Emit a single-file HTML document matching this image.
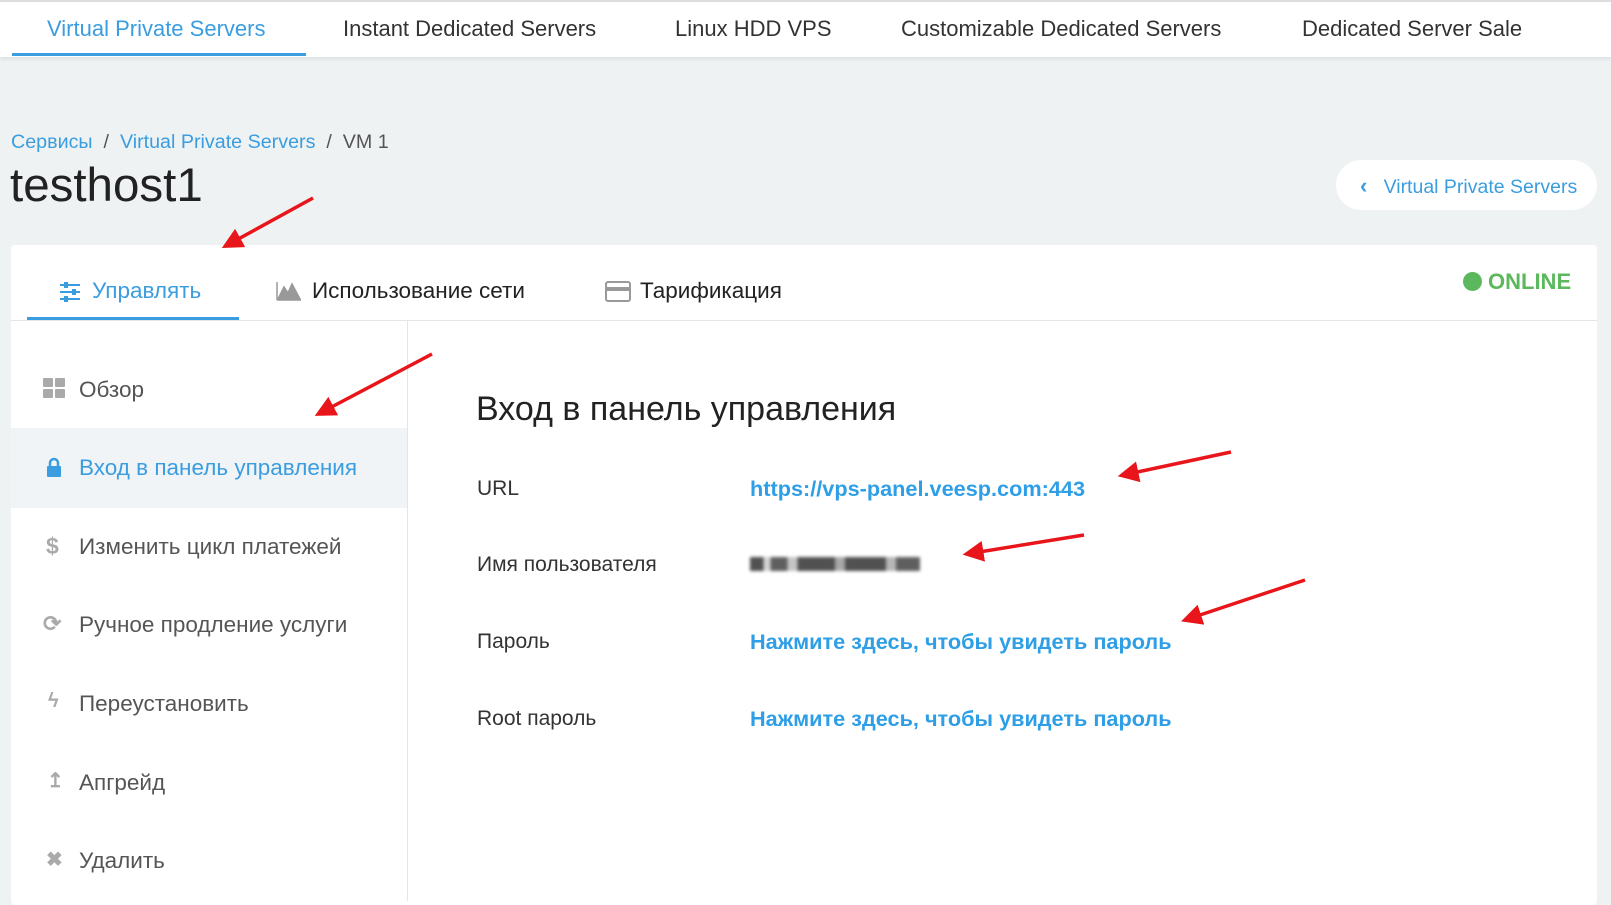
<!DOCTYPE html>
<html><head><meta charset="utf-8"><style>
*{margin:0;padding:0;box-sizing:border-box}
body{width:1611px;height:893px;background:#eef2f3;font-family:"Liberation Sans","Noto Sans CJK SC",sans-serif;position:relative;overflow:hidden;color:#333}
.a{position:absolute;white-space:nowrap}
.nav{position:absolute;left:0;top:0;width:1611px;height:57px;background:#fff;border-top:2px solid #ddd;box-shadow:0 2px 4px rgba(0,0,0,.08)}
.nav .a{top:14px;font-size:22px;color:#333}
.nav .a.blue,.blue{color:#3a9de0}
.card{position:absolute;left:11px;top:245px;width:1586px;height:660px;background:#fff;border-radius:4px}
.tab{font-size:22.5px;top:278px;color:#222}
.tab.blue{color:#3a9de0}
.side{font-size:22.5px;color:#555}
.lbl{font-size:21px;color:#333;left:477px}
.lnk{font-size:21.7px;color:#2e9fe6;left:750px;font-weight:bold}
</style></head><body>
<div class="nav">
<div class="a blue" style="left:47px">Virtual Private Servers</div>
<div class="a" style="left:343px">Instant Dedicated Servers</div>
<div class="a" style="left:675px">Linux HDD VPS</div>
<div class="a" style="left:901px">Customizable Dedicated Servers</div>
<div class="a" style="left:1302px">Dedicated Server Sale</div>
<div style="position:absolute;left:12px;top:51px;width:294px;height:3px;background:#3a9de0"></div>
</div>
<div class="a" style="left:11px;top:131px;font-size:19.7px;color:#555"><span class="blue">Сервисы</span> &nbsp;/&nbsp; <span class="blue">Virtual Private Servers</span> &nbsp;/&nbsp; VM 1</div>
<div class="a" style="left:10px;top:158px;font-size:47.5px;color:#222">testhost1</div>
<div class="a" style="left:1336px;top:160px;width:261px;height:50px;border-radius:25px;background:#fff;font-size:19.5px;color:#3a9de0;padding:13px 0 0 24px"><b style="font-size:22px">‹</b>&nbsp;&nbsp; Virtual Private Servers</div>
<div class="card"></div>
<svg class="a" style="left:58px;top:281px" width="24" height="22"><g stroke="#3a9de0" stroke-width="2"><line x1="2" y1="4" x2="22" y2="4"/><line x1="2" y1="11" x2="22" y2="11"/><line x1="2" y1="18" x2="22" y2="18"/></g><g fill="#3a9de0"><rect x="6" y="1" width="4" height="6"/><rect x="14" y="8" width="4" height="6"/><rect x="6" y="15" width="4" height="6"/></g></svg>
<div class="a tab blue" style="left:92px">Управлять</div>
<svg class="a" style="left:275px;top:280px" width="28" height="22"><path d="M2 20V2M2 20h24M3 19l6-12 4 6 4-9 8 15z" fill="#999" stroke="#999" stroke-width="1.5"/></svg>
<div class="a tab" style="left:312px">Использование сети</div>
<svg class="a" style="left:605px;top:281px" width="26" height="22"><rect x="1" y="1" width="24" height="19" rx="2" fill="none" stroke="#999" stroke-width="2"/><rect x="1" y="6" width="24" height="4" fill="#999"/></svg>
<div class="a tab" style="left:640px">Тарификация</div>
<div style="position:absolute;left:11px;top:320px;width:1586px;height:1px;background:#e5e5e5"></div>
<div style="position:absolute;left:27px;top:317px;width:212px;height:3px;background:#3a9de0"></div>
<div class="a" style="left:1463px;top:272px;width:19px;height:19px;border-radius:50%;background:#5cb85c"></div>
<div class="a" style="left:1488px;top:269px;font-size:22px;color:#5cb85c;font-weight:bold">ONLINE</div>
<div style="position:absolute;left:407px;top:321px;width:1px;height:580px;background:#e5e5e5"></div>
<div style="position:absolute;left:11px;top:428px;width:396px;height:80px;background:#f1f4f6"></div>
<svg class="a" style="left:43px;top:378px" width="22" height="22"><g fill="#aaa"><rect x="0" y="0" width="10" height="9" rx="1"/><rect x="12" y="0" width="10" height="9" rx="1"/><rect x="0" y="11" width="10" height="9" rx="1"/><rect x="12" y="11" width="10" height="9" rx="1"/></g></svg>
<div class="a side" style="left:79px;top:377px">Обзор</div>
<svg class="a" style="left:46px;top:457px" width="16" height="22"><path d="M4 10V6a4 4 0 0 1 8 0v4" fill="none" stroke="#3a9de0" stroke-width="2.5"/><rect x="1" y="9" width="14" height="11" rx="1" fill="#3a9de0"/></svg>
<div class="a side" style="left:79px;top:455px;color:#3a9de0">Вход в панель управления</div>
<div class="a side" style="left:46px;top:533px;color:#aaa;font-weight:bold;font-size:23px">$</div>
<div class="a side" style="left:79px;top:534px">Изменить цикл платежей</div>
<div class="a side" style="left:43px;top:611px;color:#aaa;font-size:22px;font-weight:bold">⟳</div>
<div class="a side" style="left:79px;top:612px">Ручное продление услуги</div>
<div class="a side" style="left:48px;top:690px;color:#aaa;font-size:20px;font-weight:bold">ϟ</div>
<div class="a side" style="left:79px;top:691px">Переустановить</div>
<div class="a side" style="left:47px;top:768px;color:#aaa;font-size:20px;font-weight:bold">↥</div>
<div class="a side" style="left:79px;top:770px">Апгрейд</div>
<div class="a side" style="left:46px;top:847px;color:#aaa;font-size:20px;font-weight:bold">✖</div>
<div class="a side" style="left:79px;top:848px">Удалить</div>
<div class="a" style="left:476px;top:390px;font-size:34px;color:#222">Вход в панель управления</div>
<div class="a lbl" style="top:477px">URL</div>
<div class="a lbl" style="top:553px">Имя пользователя</div>
<div class="a lbl" style="top:630px">Пароль</div>
<div class="a lbl" style="top:707px">Root пароль</div>
<div class="a lnk" style="top:476px">https://vps-panel.veesp.com:443</div>
<div class="a" style="left:750px;top:557px;width:170px;height:14px;background:linear-gradient(90deg,#333 0 8%,#ccc 8% 12%,#444 12% 22%,#bbb 22% 28%,#333 28% 50%,#999 50% 56%,#333 56% 80%,#aaa 80% 86%,#444 86% 100%);filter:blur(1.5px);opacity:.85"></div>
<div class="a lnk" style="top:629px">Нажмите здесь, чтобы увидеть пароль</div>
<div class="a lnk" style="top:706px">Нажмите здесь, чтобы увидеть пароль</div>
<svg class="a" style="left:0;top:0" width="1611" height="893"><defs><marker id="m" markerWidth="6" markerHeight="6" refX="3" refY="3" orient="auto"><path d="M0 0L6 3L0 6z" fill="#e8161b"/></marker></defs>
<g stroke="#e8161b" stroke-width="3.5" marker-end="url(#m)" fill="none">
<line x1="313" y1="198" x2="231" y2="243"/>
<line x1="432" y1="354" x2="324" y2="411"/>
<line x1="1231" y1="452" x2="1128" y2="474"/>
<line x1="1084" y1="535" x2="973" y2="553"/>
<line x1="1305" y1="580" x2="1191" y2="618"/>
</g></svg>
</body></html>
